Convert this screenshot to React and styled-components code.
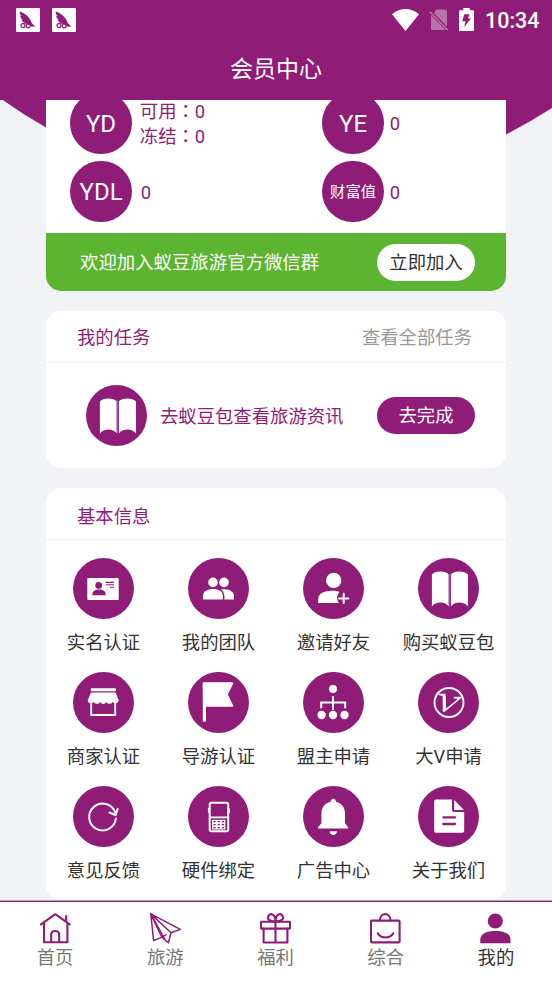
import React from 'react';
import styled, { createGlobalStyle, ThemeProvider } from 'styled-components';

const theme = {
  colors: {
    primary: '#8f1d78',
    background: '#f1f3f6',
    green: '#5cb531',
    text: '#333333',
    muted: '#999999',
  },
};

const GlobalStyle = createGlobalStyle`
  * {
    box-sizing: border-box;
  }
  body {
    margin: 0;
    font-family: Roboto, 'Noto Sans CJK SC', sans-serif;
    font-size: 18.35px;
    line-height: 26px;
    color: ${theme.colors.text};
  }
`;

const Page = styled.div`
  display: flex;
  flex-direction: column;
  height: 981px;
  overflow: hidden;
  background: ${({ theme }) => theme.colors.background};
`;

const Header = styled.header`
  height: 99.5px;
  flex: none;
  background: ${({ theme }) => theme.colors.primary};
  color: #fff;
`;

const StatusBar = styled.div`
  display: flex;
  justify-content: space-between;
  height: 39px;
  padding: 0 12.5px 0 15.5px;
`;

const StatusGroup = styled.div`
  display: flex;
  align-items: center;
  gap: ${({ $gap }) => $gap}px;
`;

const Clock = styled.span`
  margin-left: 1px;
  font-size: 21.5px;
  font-weight: 500;
  line-height: 24px;
  padding-top: 2px;
`;

const Title = styled.h1`
  margin: 14px 0 0;
  font-size: 23px;
  font-weight: 400;
  line-height: 34px;
  text-align: center;
`;

const Content = styled.main`
  flex: 1;
  min-height: 0;
  display: grid;
  grid-template-columns: 552px;
  overflow: hidden;
`;

const Curve = styled.svg`
  grid-area: 1 / 1;
  width: 552px;
  height: 60px;
  fill: ${({ theme }) => theme.colors.primary};
`;

const Cards = styled.div`
  grid-area: 1 / 1;
  display: flex;
  flex-direction: column;
  gap: 20px;
  padding: 0 46px;
`;

const Card = styled.section`
  background: #fff;
  border-radius: ${({ $flat }) => ($flat ? '0 0 15px 15px' : '15px')};
  overflow: hidden;
  height: ${({ $height }) => $height}px;
  flex: none;
`;

const Balances = styled.div`
  display: grid;
  grid-template-columns: 252px 1fr;
  row-gap: 7px;
  margin-top: -7.5px;
  padding: 0 0 11px 24.3px;
`;

const Balance = styled.div`
  display: flex;
  align-items: center;
  gap: ${({ $gap }) => $gap}px;
  color: ${({ theme }) => theme.colors.primary};
`;

const Amount = styled.div`
  padding-top: 2px;
  line-height: 25px;
`;

const Circle = styled.div`
  display: flex;
  flex: none;
  align-items: center;
  justify-content: center;
  width: 61.5px;
  height: 61.5px;
  padding-top: ${({ $label }) => ($label ? 2 : 0)}px;
  border-radius: 50%;
  background: ${({ theme }) => theme.colors.primary};
  color: #fff;
  font-size: ${({ $small }) => ($small ? 15.3 : 24)}px;
`;

const Colon = styled.span`
  font-family: 'Noto Sans CJK TC', sans-serif;
  line-height: 20px;
`;

const Banner = styled.div`
  display: flex;
  align-items: center;
  justify-content: space-between;
  height: 58.5px;
  padding: 0 31px 0 34px;
  background: ${({ theme }) => theme.colors.green};
  color: #fff;
`;

const BannerText = styled.span`
  padding-top: 2px;
  font-size: 18.4px;
`;

const Button = styled.button`
  width: 98px;
  height: 37px;
  padding: 1px 0 0;
  border: 0;
  border-radius: 19px;
  font: inherit;
  color: ${({ $primary, theme }) => ($primary ? '#fff' : theme.colors.text)};
  background: ${({ $primary, theme }) => ($primary ? theme.colors.primary : '#fff')};
`;

const CardHeader = styled.div`
  display: flex;
  align-items: center;
  justify-content: space-between;
  height: 52px;
  padding: ${({ $top }) => $top}px 34px 0 31px;
  border-bottom: 1px solid #edeff1;
  color: ${({ theme }) => theme.colors.primary};
`;

const More = styled.span`
  color: ${({ theme }) => theme.colors.muted};
`;

const Task = styled.div`
  display: flex;
  align-items: center;
  height: 105px;
  padding: 0 31px 0 39.5px;
  color: ${({ theme }) => theme.colors.primary};
`;

const TaskName = styled.span`
  flex: 1;
  padding: 2px 0 0 13px;
`;

const Grid = styled.div`
  display: grid;
  grid-template-columns: repeat(4, 115px);
  grid-auto-rows: 114.2px;
  padding-top: 18px;
`;

const Item = styled.div`
  display: flex;
  flex-direction: column;
  align-items: center;
  gap: 11px;
  white-space: nowrap;
`;

const TabBar = styled.nav`
  display: flex;
  flex: none;
  height: 81px;
  padding-right: 1px;
  border-top: 1px solid #cf8fc2;
  box-shadow: inset 0 1px 0 #6f2a60;
  background: #fff;
`;

const Tab = styled.div`
  display: flex;
  flex: 1;
  flex-direction: column;
  align-items: center;
  gap: 1px;
  padding-top: 12px;
  color: ${({ $active, theme }) => ($active ? theme.colors.text : '#777')};

  svg {
    color: ${({ theme }) => theme.colors.primary};
  }
`;

const purple = theme.colors.primary;

const Glyph = ({ children }) => (
  <svg width="61" height="61" viewBox="0 0 61 61" fill="#fff" strokeLinecap="round" strokeLinejoin="round">
    {children}
  </svg>
);

const BookIcon = () => (
  <Glyph>
    <path d="M13.9 16.5C16.5 12.8 27.5 12.6 30.6 16.2V48.3C27.5 43.2 17.5 43 13.9 48.6Z" />
    <path d="M33 16.2C36.2 12.6 47 12.8 50 16.5V48.6C46.4 43 36.2 43.2 33 48.3Z" />
    <path d="M31.8 16V48.5" stroke="#fff" strokeWidth=".5" opacity=".6" />
  </Glyph>
);

const IdIcon = () => (
  <Glyph>
    <rect x="14.3" y="20" width="31.4" height="22" rx=".8" />
    <g fill={purple}>
      <circle cx="25.7" cy="27.4" r="3.4" />
      <path d="M19.3 37.2C19 33 22.5 31.6 26 31.6S33 33 32.7 37.2Z" />
    </g>
    <path d="M32.6 24.4H41M32.8 26.8H41M37 29.2H41" stroke={purple} strokeWidth="1.1" strokeLinecap="butt" />
  </Glyph>
);

const TeamIcon = () => (
  <Glyph>
    <circle cx="36" cy="24.4" r="4.8" />
    <path d="M33 31.6C40 30 46 33 46 38V41.4H33Z" />
    <circle cx="25" cy="24.4" r="5.6" fill={purple} />
    <circle cx="25" cy="24.4" r="4.8" />
    <path d="M15 41.4V38C15 33 19.5 31 25 31S35.2 33 35.2 38V41.4Z" stroke={purple} strokeWidth="2.4" />
    <path d="M15 41.4V38C15 33 19.5 31 25 31S34.8 33 34.8 38V41.4Z" />
  </Glyph>
);

const InviteIcon = () => (
  <Glyph>
    <circle cx="30.7" cy="22.4" r="7.7" />
    <path d="M15.2 45V41.5C15.2 35.5 21 32.8 29 32.8C32.5 32.8 35 33.3 36.6 34C33.4 37.3 33.4 41.4 36 45Z" />
    <path d="M40.7 35.8V45M36.1 40.4H45.4" stroke="#fff" strokeWidth="2" />
  </Glyph>
);

const ShopIcon = () => (
  <Glyph>
    <rect x="17.8" y="16.3" width="25.2" height="2.9" rx="1" />
    <path d="M18 20.6H42.6L45.7 28.2C45.7 31.6 41.2 32.2 39.7 29.9C38.4 32.5 34.5 32.5 33.2 30C32 32.5 28.4 32.5 27.1 30C25.8 32.5 22.2 32.5 20.8 29.9C19.2 32.2 14.7 31.6 14.7 28.2Z" />
    <path d="M18.2 32V43H42.2V32" fill="none" stroke="#fff" strokeWidth="1.9" />
  </Glyph>
);

const FlagIcon = () => (
  <Glyph>
    <path d="M16.4 12V48.2" stroke="#fff" strokeWidth="3.2" />
    <path d="M15.6 11.2H44.4L38.8 22.5L44.4 33.8H16Z" stroke="#fff" strokeWidth="1.8" />
  </Glyph>
);

const TreeIcon = () => (
  <Glyph>
    <circle cx="30" cy="17" r="4" />
    <path d="M30 24V38M18.2 36.2V30.4H42.2V36.2" fill="none" stroke="#fff" strokeWidth="2" strokeLinecap="butt" strokeLinejoin="miter" />
    <circle cx="18.6" cy="43" r="4.2" />
    <circle cx="30" cy="43" r="4.2" />
    <circle cx="41.5" cy="43" r="4.2" />
  </Glyph>
);

const VIcon = () => (
  <Glyph>
    <circle cx="31" cy="30.5" r="14.5" fill="none" stroke="#fff" strokeWidth="1.9" />
    <path d="M20.6 21.7H27.6L28.2 36.4L39.6 27.2L35.8 26.3V24.7H43.6V25.8L26.4 40L24.8 39.6L24.6 24L20.6 23.1Z" />
  </Glyph>
);

const RefreshIcon = () => (
  <Glyph>
    <path d="M42.9 32.5A13.4 13.4 0 1 1 42.2 26.5" fill="none" stroke="#fff" strokeWidth="2" />
    <path d="M36.4 26.5L42.6 29.1L44.7 22.9" fill="none" stroke="#fff" strokeWidth="2" />
  </Glyph>
);

const PhoneIcon = () => (
  <Glyph>
    <path d="M21.6 22.6H20.5V26.4H21.6M40.2 22.6H41.2V26.4H40.2" stroke="#fff" strokeWidth="1.2" />
    <rect x="21.7" y="16.7" width="18.5" height="28.5" rx="1.6" fill="none" stroke="#fff" strokeWidth="2" />
    <path d="M22 31.4H40" stroke="#fff" strokeWidth="1.7" />
    <rect x="24" y="33.8" width="13.4" height="9.7" />
    <g fill={purple}>
      {[25.4, 29.6, 33.8].map((x) =>
        [35, 38, 41].map((y) => <rect key={`${x}-${y}`} x={x} y={y} width="2.2" height="1.3" />)
      )}
    </g>
  </Glyph>
);

const BellIcon = () => (
  <Glyph>
    <circle cx="30.3" cy="15.2" r="2.5" />
    <path d="M30.3 15.4C37.6 15.6 42 20.5 42 27.5V36.5C42 38.6 45.3 39.8 45.3 42.5H15C15 39.8 18.4 38.6 18.4 36.5V27.5C18.4 20.5 23 15.6 30.3 15.4Z" />
    <path d="M26.6 45.2H34C33.7 50.3 26.9 50.3 26.6 45.2Z" />
  </Glyph>
);

const DocIcon = () => (
  <Glyph>
    <path d="M18 13.5H34V23.5Q34 26 36.5 26H46.2V45Q46.2 46.8 44.4 46.8H18Q16.2 46.8 16.2 45V15.3Q16.2 13.5 18 13.5Z" />
    <path d="M36.2 14L46 24H36.2Z" />
    <path d="M25.3 31.3H37M25.3 38H37" stroke={purple} strokeWidth="2.3" />
  </Glyph>
);

const NavGlyph = ({ children, width = 2.1 }) => (
  <svg width="31" height="31" viewBox="0 0 31 31" fill="none" stroke="currentColor" strokeWidth={width} strokeLinecap="round" strokeLinejoin="round">
    {children}
  </svg>
);

const HomeTab = () => (
  <NavGlyph>
    <path d="M1 11.3L15.3 1.2L29.7 11.3M26.2 8.5V3M4 10V29.2H27.4V10M11.2 29V21.5C11.2 16.8 19.2 16.8 19.2 21.5V29" />
  </NavGlyph>
);

const PlaneTab = () => (
  <NavGlyph width={1.5}>
    <path d="M.8 .9L30.3 16.4L21 19.8L18.4 29.7L11.8 24.1L3.6 27.6ZM.8 .9L21 19.8M.8 .9L11.8 24.1L16 21.8" />
    <path d="M.8 .9L15 26.5" />
  </NavGlyph>
);

const GiftTab = () => (
  <NavGlyph>
    <rect x="1" y="8.8" width="29" height="6.8" rx=".5" />
    <path d="M3.6 15.6V29.5H27.4V15.6M15.5 8.8V29.5M15.5 8.5C9 8.5 7.2 5.8 8.2 3.4C9.6 0 15.5 0 15.5 8.5C15.5 0 21.4 0 22.8 3.4C23.8 5.8 22 8.5 15.5 8.5" />
  </NavGlyph>
);

const BagTab = () => (
  <NavGlyph>
    <rect x="1" y="7.6" width="28.6" height="21.8" rx="1" />
    <path d="M9.8 7.4C10 -1 20.4 -1 20.6 7.4M7.8 20.3C10.5 25.8 20.4 25.8 23.2 20.3" />
  </NavGlyph>
);

const UserTab = () => (
  <svg width="31" height="31" viewBox="0 0 31 31" fill="currentColor">
    <circle cx="15.3" cy="8" r="7.6" />
    <path d="M.3 30.3V26.5C.3 20.5 7 18 15.4 18S30.5 20.5 30.5 26.5V30.3Z" />
  </svg>
);

const AppBadge = () => (
  <svg width="24" height="24" viewBox="0 0 24 24">
    <rect width="24" height="24" rx="1.2" fill="#fff" />
    <path d="M3.7 3.4C9.2 5 14 9.4 15.9 15.2L19.6 18.8L15 18.2C11.5 15.6 6.6 14.8 5.2 11.8L7 12.2C4.9 10.4 4 8.8 4.3 7.4L5.9 8.2C4.1 6.6 3.4 5 3.7 3.4Z" fill={purple} />
    <path d="M6 15.6L13.6 14.2L16.2 18.6" fill="none" stroke={purple} strokeWidth="1.2" />
    <circle cx="7" cy="17.6" r="2" fill="none" stroke={purple} strokeWidth="1.2" />
    <circle cx="12.2" cy="17.8" r="2" fill="none" stroke={purple} strokeWidth="1.2" />
  </svg>
);

const WifiIcon = () => (
  <svg width="27" height="22" viewBox="0 0 27 22" fill="#fff">
    <path d="M0 5.2Q13.5-5 27 5.2L13.5 22Z" />
  </svg>
);

const SimIcon = () => (
  <svg width="20" height="22" viewBox="0 0 20 22" opacity=".38">
    <path d="M7.2 .6H16.4Q18 .6 18 2.2V17.6L5 4.3ZM2 6L16.8 21H3.6Q2 21 2 19.4Z" fill="#fff" />
    <path d="M.6 2.5L19 21.2" stroke="#fff" strokeWidth="1.4" />
  </svg>
);

const BatteryIcon = () => (
  <svg width="15" height="23" viewBox="0 0 15 23">
    <path d="M4.3 0H10.7V2.3H14Q15 2.3 15 3.3V22Q15 23 14 23H1Q0 23 0 22V3.3Q0 2.3 1 2.3H4.3Z" fill="#fff" />
    <path d="M5.3 6.2H10.6L9 10.5H12L5.2 19L6.5 13.3H3.2Z" fill={purple} />
  </svg>
);

const items = [
  { name: '实名认证', Icon: IdIcon },
  { name: '我的团队', Icon: TeamIcon },
  { name: '邀请好友', Icon: InviteIcon },
  { name: '购买蚁豆包', Icon: BookIcon },
  { name: '商家认证', Icon: ShopIcon },
  { name: '导游认证', Icon: FlagIcon },
  { name: '盟主申请', Icon: TreeIcon },
  { name: '大V申请', Icon: VIcon },
  { name: '意见反馈', Icon: RefreshIcon },
  { name: '硬件绑定', Icon: PhoneIcon },
  { name: '广告中心', Icon: BellIcon },
  { name: '关于我们', Icon: DocIcon },
];

const tabs = [
  { name: '首页', Icon: HomeTab },
  { name: '旅游', Icon: PlaneTab },
  { name: '福利', Icon: GiftTab },
  { name: '综合', Icon: BagTab },
  { name: '我的', Icon: UserTab, active: true },
];

const App = () => {
  return (
    <ThemeProvider theme={theme}>
      <GlobalStyle />
      <Page>
        <Header>
          <StatusBar>
            <StatusGroup $gap={12.5}>
              <AppBadge />
              <AppBadge />
            </StatusGroup>
            <StatusGroup $gap={10}>
              <WifiIcon />
              <SimIcon />
              <BatteryIcon />
              <Clock>10:34</Clock>
            </StatusGroup>
          </StatusBar>
          <Title>会员中心</Title>
        </Header>
        <Content>
          <Curve viewBox="0 0 552 60">
            <path d="M0 -2Q22 14 46 27.5L120 60H430L506 34.5Q530 22 552 8V0H0Z" />
          </Curve>
          <Cards>
            <Card $flat $height={191.5}>
              <Balances>
                <Balance $gap={8}>
                  <Circle $label>YD</Circle>
                  <Amount>
                    <div>可用<Colon>：</Colon>0</div>
                    <div>冻结<Colon>：</Colon>0</div>
                  </Amount>
                </Balance>
                <Balance $gap={6}>
                  <Circle $label>YE</Circle>
                  <Amount>0</Amount>
                </Balance>
                <Balance $gap={9}>
                  <Circle $label>YDL</Circle>
                  <Amount>0</Amount>
                </Balance>
                <Balance $gap={6}>
                  <Circle $label $small>财富值</Circle>
                  <Amount>0</Amount>
                </Balance>
              </Balances>
              <Banner>
                <BannerText>欢迎加入蚁豆旅游官方微信群</BannerText>
                <Button>立即加入</Button>
              </Banner>
            </Card>
            <Card $height={156.5}>
              <CardHeader $top={2}>
                <span>我的任务</span>
                <More>查看全部任务</More>
              </CardHeader>
              <Task>
                <Circle>
                  <BookIcon />
                </Circle>
                <TaskName>去蚁豆包查看旅游资讯</TaskName>
                <Button $primary>去完成</Button>
              </Task>
            </Card>
            <Card $height={412}>
              <CardHeader $top={7}>
                <span>基本信息</span>
              </CardHeader>
              <Grid>
                {items.map(({ name, Icon }) => (
                  <Item key={name}>
                    <Circle>
                      <Icon />
                    </Circle>
                    <span>{name}</span>
                  </Item>
                ))}
              </Grid>
            </Card>
          </Cards>
        </Content>
        <TabBar>
          {tabs.map(({ name, Icon, active }) => (
            <Tab key={name} $active={active}>
              <Icon />
              <span>{name}</span>
            </Tab>
          ))}
        </TabBar>
      </Page>
    </ThemeProvider>
  );
};

export default App;
